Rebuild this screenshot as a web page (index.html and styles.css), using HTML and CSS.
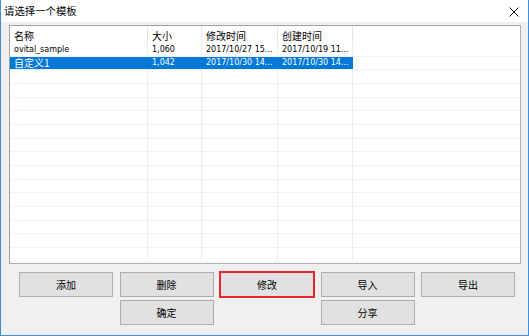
FILE: index.html
```html
<!DOCTYPE html>
<html lang="zh-CN">
<head>
    <meta charset="UTF-8">
    <title>请选择一个模板</title>
    <link rel="stylesheet" href="styles.css">
</head>
<body>
    <div class="window">
        <div class="titlebar">
            <span class="title">请选择一个模板</span>
            <svg class="close" width="10" height="10" viewBox="0 0 10 10">
                <path d="M0.5 0.5 L9.5 9.5 M9.5 0.5 L0.5 9.5" stroke="#111" stroke-width="1" fill="none"/>
            </svg>
        </div>

        <div class="client">
            <div class="list">
                <div class="row header">
                    <div class="cell">名称</div>
                    <div class="cell">大小</div>
                    <div class="cell">修改时间</div>
                    <div class="cell">创建时间</div>
                    <div class="cell filler"></div>
                </div>
                <div class="row">
                    <div class="cell latin">ovital_sample</div>
                    <div class="cell latin">1,060</div>
                    <div class="cell latin">2017/10/27 15...</div>
                    <div class="cell latin">2017/10/19 11...</div>
                    <div class="cell filler"></div>
                </div>
                <div class="row selected">
                    <div class="cell">自定义1</div>
                    <div class="cell latin">1,042</div>
                    <div class="cell latin">2017/10/30 14...</div>
                    <div class="cell latin">2017/10/30 14...</div>
                    <div class="cell filler"></div>
                </div>
                <div class="row"><div class="cell"></div><div class="cell"></div><div class="cell"></div><div class="cell"></div><div class="cell filler"></div></div>
                <div class="row"><div class="cell"></div><div class="cell"></div><div class="cell"></div><div class="cell"></div><div class="cell filler"></div></div>
                <div class="row"><div class="cell"></div><div class="cell"></div><div class="cell"></div><div class="cell"></div><div class="cell filler"></div></div>
                <div class="row"><div class="cell"></div><div class="cell"></div><div class="cell"></div><div class="cell"></div><div class="cell filler"></div></div>
                <div class="row"><div class="cell"></div><div class="cell"></div><div class="cell"></div><div class="cell"></div><div class="cell filler"></div></div>
                <div class="row"><div class="cell"></div><div class="cell"></div><div class="cell"></div><div class="cell"></div><div class="cell filler"></div></div>
                <div class="row"><div class="cell"></div><div class="cell"></div><div class="cell"></div><div class="cell"></div><div class="cell filler"></div></div>
                <div class="row"><div class="cell"></div><div class="cell"></div><div class="cell"></div><div class="cell"></div><div class="cell filler"></div></div>
                <div class="row"><div class="cell"></div><div class="cell"></div><div class="cell"></div><div class="cell"></div><div class="cell filler"></div></div>
                <div class="row"><div class="cell"></div><div class="cell"></div><div class="cell"></div><div class="cell"></div><div class="cell filler"></div></div>
                <div class="row"><div class="cell"></div><div class="cell"></div><div class="cell"></div><div class="cell"></div><div class="cell filler"></div></div>
                <div class="row"><div class="cell"></div><div class="cell"></div><div class="cell"></div><div class="cell"></div><div class="cell filler"></div></div>
                <div class="row"><div class="cell"></div><div class="cell"></div><div class="cell"></div><div class="cell"></div><div class="cell filler"></div></div>
                <div class="row"><div class="cell"></div><div class="cell"></div><div class="cell"></div><div class="cell"></div><div class="cell filler"></div></div>
            </div>

            <div class="buttons">
                <button class="btn">添加</button>
                <button class="btn">删除</button>
                <button class="btn focused">修改</button>
                <button class="btn">导入</button>
                <button class="btn">导出</button>
                <button class="btn col-2">确定</button>
                <button class="btn col-4">分享</button>
            </div>
        </div>
    </div>
</body>
</html>
```

FILE: styles.css
```css
body {
    margin: 0;
    padding: 0;
    font-family: "Noto Sans CJK SC", sans-serif;
    background-color: #f0f0f0;
}

.window {
    box-sizing: border-box;
    width: 529px;
    height: 336px;
    border-left: 1px solid #3b8fdc;
    border-right: 1px solid #3b8fdc;
    border-bottom: 1px solid #3b8fdc;
    background-color: #f0f0f0;
    display: flex;
    flex-direction: column;
}

.titlebar {
    height: 22px;
    background-color: #fff;
    display: flex;
    align-items: center;
    justify-content: space-between;
    padding-left: 3px;
    padding-right: 9px;
}

.title {
    font-size: 10.4px;
    color: #000;
    line-height: 1;
    margin-top: 1px;
}

.close {
    display: block;
    margin-top: 1px;
}

.client {
    padding: 3px 7px 0 8px;
}

.list {
    box-sizing: border-box;
    height: 239px;
    background-color: #fff;
    border: 1px solid #adadad;
    border-top-color: #a0a0a0;
    border-left-color: #a0a0a0;
    overflow: hidden;
}

.row {
    display: grid;
    grid-template-columns: 138px 54px 76px 75px 1fr;
    height: 13.67px;
    box-sizing: border-box;
    border-bottom: 1px solid #f2f2f2;
}

.row.header {
    height: 17px;
    border-bottom: none;
}

.cell {
    box-sizing: border-box;
    border-right: 1px solid #ececec;
    padding-left: 4px;
    font-size: 10px;
    color: #000;
    display: flex;
    align-items: center;
    white-space: nowrap;
    overflow: hidden;
}

.header .cell {
    border-right-color: #e5e5e5;
    padding-top: 1px;
}

.cell.filler {
    border-right: none;
}

.cell.latin {
    font-family: "DejaVu Sans", sans-serif;
    font-size: 8px;
}

.row.selected .cell {
    background-color: #0078d7;
    color: #fff;
    border-right-color: #0078d7;
}

.row.selected .cell.filler {
    background-color: #fff;
}

.buttons {
    display: grid;
    grid-template-columns: repeat(5, 94px);
    grid-auto-rows: 25px;
    column-gap: 6.5px;
    row-gap: 3px;
    margin-top: 8px;
    margin-left: 10px;
}

.btn {
    background-color: #e1e1e1;
    border: 1px solid #adadad;
    border-radius: 0;
    padding: 0;
    font-family: "Noto Sans CJK SC", sans-serif;
    font-size: 10px;
    color: #000;
}

.btn.focused {
    outline: 2px solid #e5262e;
    outline-offset: -1px;
}

.btn.col-2 {
    grid-column: 2;
}

.btn.col-4 {
    grid-column: 4;
}
```
